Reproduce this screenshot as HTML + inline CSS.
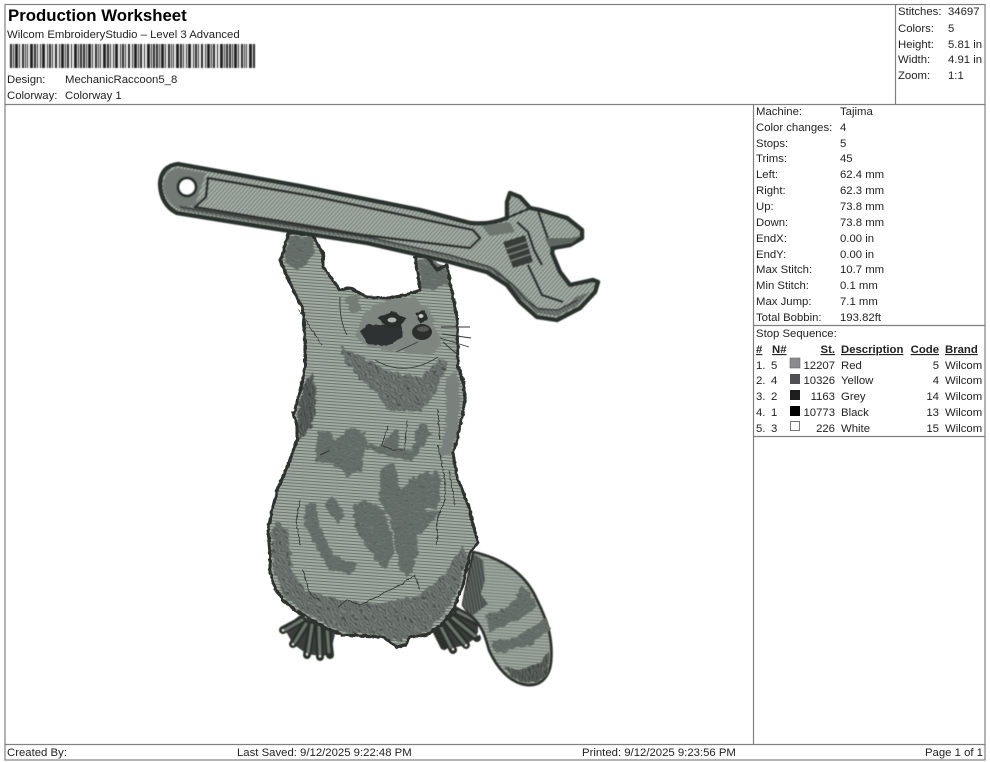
<!DOCTYPE html>
<html><head><meta charset="utf-8"><style>
html,body{margin:0;padding:0;background:#fff;width:990px;height:762px;overflow:hidden}
svg{display:block}
text{font-family:"Liberation Sans",Arial,sans-serif;font-size:11.35px;fill:#222}
.b{font-weight:bold;text-decoration:underline}
.e{text-anchor:end}
</style></head><body>
<svg width="990" height="762" viewBox="0 0 990 762" xmlns="http://www.w3.org/2000/svg">
<defs>
<pattern id="body" width="8" height="3" patternUnits="userSpaceOnUse" patternTransform="rotate(4)"><rect width="8" height="3" fill="#a0aaa1"/><rect y="2" width="8" height="1" fill="#6d766f"/></pattern>
<pattern id="diag" width="3" height="3" patternUnits="userSpaceOnUse" patternTransform="rotate(-48)"><rect width="3" height="3" fill="#a8b1a9"/><rect y="2" width="3" height="1" fill="#667068"/></pattern>
<pattern id="mid" width="3" height="3" patternUnits="userSpaceOnUse" patternTransform="rotate(50)"><rect width="3" height="3" fill="#747c76"/><rect y="2" width="3" height="1" fill="#484e4a"/></pattern>
<pattern id="patch" width="8" height="2.4" patternUnits="userSpaceOnUse" patternTransform="rotate(5)"><rect width="8" height="2.4" fill="#6d756f"/><rect y="1.6" width="8" height=".8" fill="#555c56"/></pattern>
<pattern id="drk" width="3" height="3" patternUnits="userSpaceOnUse" patternTransform="rotate(80)"><rect width="3" height="3" fill="#5d635e"/><rect y="2" width="3" height="1" fill="#393d39"/></pattern>
<filter id="rough" filterUnits="userSpaceOnUse" x="0" y="100" width="750" height="640"><feTurbulence type="fractalNoise" baseFrequency=".16" numOctaves="2" seed="4"/><feDisplacementMap in="SourceGraphic" scale="7" xChannelSelector="R" yChannelSelector="G"/><feGaussianBlur stdDeviation=".45"/></filter>
<filter id="edge" filterUnits="userSpaceOnUse" x="0" y="100" width="750" height="640"><feTurbulence type="fractalNoise" baseFrequency=".22" numOctaves="2" seed="9"/><feDisplacementMap in="SourceGraphic" scale="3" xChannelSelector="R" yChannelSelector="G"/><feGaussianBlur stdDeviation=".35"/></filter>
<filter id="soft" filterUnits="userSpaceOnUse" x="0" y="0" width="990" height="762"><feGaussianBlur stdDeviation=".4"/></filter>
</defs>
<rect width="990" height="762" fill="#fff"/>
<g fill="none" stroke="#808080" stroke-width="1.2">
<rect x="5" y="4.5" width="980" height="755.5"/>
<path d="M5 104.5H985M895.5 4.5V104.5M753.5 104.5V744.5M5 744.5H985M753.5 325.5H985M753.5 436.5H985"/>
</g>
<path d="M10 56H256" stroke="#222" stroke-width="24" fill="none" filter="url(#soft)" stroke-dasharray="2 1 1 1 3 1 1 2 2 1 1 1 1 2 3 1 2 1 1 2 1 1 3 2 1 1 2 1 1 2 2 2 1 1 3 1 1 1 2 2 1 2 3 1 1 1 2 1"/>
<text x="8" y="21" style="font-size:16.8px;font-weight:bold;fill:#000">Production Worksheet</text>
<text x="7" y="38">Wilcom EmbroideryStudio – Level 3 Advanced</text>
<text x="7" y="83">Design:</text><text x="65" y="83">MechanicRaccoon5_8</text>
<text x="7" y="99">Colorway:</text><text x="65" y="99">Colorway 1</text>
<text x="898" y="15">Stitches:</text><text x="948" y="15">34697</text>
<text x="898" y="32">Colors:</text><text x="948" y="32">5</text>
<text x="898" y="48">Height:</text><text x="948" y="48">5.81 in</text>
<text x="898" y="63">Width:</text><text x="948" y="63">4.91 in</text>
<text x="898" y="79">Zoom:</text><text x="948" y="79">1:1</text>
<text x="756" y="115">Machine:</text><text x="840" y="115">Tajima</text>
<text x="756" y="131">Color changes:</text><text x="840" y="131">4</text>
<text x="756" y="147">Stops:</text><text x="840" y="147">5</text>
<text x="756" y="162">Trims:</text><text x="840" y="162">45</text>
<text x="756" y="178">Left:</text><text x="840" y="178">62.4 mm</text>
<text x="756" y="194">Right:</text><text x="840" y="194">62.3 mm</text>
<text x="756" y="210">Up:</text><text x="840" y="210">73.8 mm</text>
<text x="756" y="226">Down:</text><text x="840" y="226">73.8 mm</text>
<text x="756" y="242">EndX:</text><text x="840" y="242">0.00 in</text>
<text x="756" y="258">EndY:</text><text x="840" y="258">0.00 in</text>
<text x="756" y="273">Max Stitch:</text><text x="840" y="273">10.7 mm</text>
<text x="756" y="289">Min Stitch:</text><text x="840" y="289">0.1 mm</text>
<text x="756" y="305">Max Jump:</text><text x="840" y="305">7.1 mm</text>
<text x="756" y="321">Total Bobbin:</text><text x="840" y="321">193.82ft</text>
<text x="756" y="337">Stop Sequence:</text>
<text x="756" y="353" class="b">#</text><text x="772" y="353" class="b">N#</text><text x="835" y="353" class="b e">St.</text><text x="841" y="353" class="b">Description</text><text x="939" y="353" class="b e">Code</text><text x="945" y="353" class="b">Brand</text>
<text x="756" y="369">1.</text><text x="771" y="369">5</text><rect x="790" y="358" width="10" height="10" fill="#8b8b8f" stroke="#666" stroke-width=".6"/><text x="835" y="369" class="e">12207</text><text x="841" y="369">Red</text><text x="939" y="369" class="e">5</text><text x="945" y="369">Wilcom</text>
<text x="756" y="384">2.</text><text x="771" y="384">4</text><rect x="790" y="374" width="10" height="10" fill="#505054"/><text x="835" y="384" class="e">10326</text><text x="841" y="384">Yellow</text><text x="939" y="384" class="e">4</text><text x="945" y="384">Wilcom</text>
<text x="756" y="400">3.</text><text x="771" y="400">2</text><rect x="790" y="390" width="10" height="10" fill="#1e1e1e"/><text x="835" y="400" class="e">1163</text><text x="841" y="400">Grey</text><text x="939" y="400" class="e">14</text><text x="945" y="400">Wilcom</text>
<text x="756" y="416">4.</text><text x="771" y="416">1</text><rect x="790" y="406" width="10" height="10" fill="#000"/><text x="835" y="416" class="e">10773</text><text x="841" y="416">Black</text><text x="939" y="416" class="e">13</text><text x="945" y="416">Wilcom</text>
<text x="756" y="432">5.</text><text x="771" y="432">3</text><rect x="790.5" y="421.5" width="9" height="9" fill="#fff" stroke="#555" stroke-width=".8"/><text x="835" y="432" class="e">226</text><text x="841" y="432">White</text><text x="939" y="432" class="e">15</text><text x="945" y="432">Wilcom</text>
<text x="7" y="756">Created By:</text><text x="237" y="756">Last Saved: 9/12/2025 9:22:48 PM</text><text x="582" y="756">Printed: 9/12/2025 9:23:56 PM</text><text x="983" y="756" class="e">Page 1 of 1</text>

<!-- feet -->
<g filter="url(#soft)" fill="none" stroke-linecap="round">
<path d="M456 606L478 620 478 636 466 645 452 648 432 632Z" fill="#3a3e3a"/>
<path d="M300 615L284 628 293 644 307 654 320 656 330 655 336 630Z" fill="#3a3e3a"/>
<g stroke="#2c302c" stroke-width="8"><path d="M458 612L478 622M453 618L477 638M447 622L466 645M441 627L453 650M436 630L444 646"/><path d="M302 620L283 630M306 624L293 644M312 625L307 655M319 627L320 657M327 628L330 655"/></g>
<g stroke="#6c736d" stroke-width="2.8"><path d="M458 612L476 621M453 618L475 636M447 622L464 643M441 627L451 647"/><path d="M302 620L285 630M306 624L295 642M312 625L308 652M319 627L320 654M327 628L329 652"/></g>
<g stroke="#e8e8e8" stroke-width="2"><path d="M478 634V634.5M466 645V645.5M453 649V649.5M283 630V630.5M293 644V644.5M307 654V654.5M320 656V656.5"/></g>
</g>
<!-- tail -->
<g filter="url(#soft)">
<path d="M473 552C500 558 525 572 537 600C548 622 553 640 551 662C549 680 538 686 527 685C510 683 497 668 489 650C485 635 482 625 470 615L463 605Z" fill="url(#body)" stroke="#2f332f" stroke-width="2.8" stroke-linejoin="round"/>
<path d="M474 554L483 560 485 580 481 594 488 604 472 616 462 605Z" fill="url(#drk)"/>
</g>
<g filter="url(#rough)"><path d="M486 615L505 610 516 598 521 587 530 592 537 607 522 618 505 626 490 632Z" fill="url(#patch)"/>
<path d="M492 640L515 638 533 627 546 618 549 630 530 646 510 650 495 654Z" fill="url(#patch)"/>
<path d="M502 666L520 670 538 664 549 652 548 672 540 682 525 683 512 677Z" fill="url(#drk)"/></g>
<!-- body -->
<path d="M288 233L284 250 280 260 290 283 303 310 305 340 305 367 302 383 298 398 295 412 293 413 297 425 297 440 288 465 277 490 276 496 272 510 268 530 270 555 270 573 276 590 283 600 295 610 307 617 325 628 343 635 365 636 383 637 397 647 405 645 410 637 427 635 441 625 453 610 463 585 470 553 478 542 473 525 470 510 463 492 457 477 455 465 453 453 458 436 462 417 465 400 463 380 458 367 457 317 450 283 447 265 437 270 425 255 415 257 418 275 420 290 405 295 390 298 367 297 350 288 340 290 323 267 323 253 315 240 313 235Z" fill="url(#body)"/>
<g filter="url(#rough)">
<path d="M289 236L313 238 316 252 308 262 297 270 284 262Z" fill="url(#patch)"/>
<path d="M418 260L430 258 446 268 448 285 430 290 421 288Z" fill="url(#patch)"/>
<path d="M303 385L313 372 317 400 312 425 299 440 297 415Z" fill="url(#drk)"/>
<path d="M445 378L456 372 461 400 459 430 450 452 440 458 447 415Z" fill="#7a817b"/>
<path d="M272 528L278 522 288 530 292 570 305 590 340 600 380 604 420 594 445 575 462 545 467 556 458 590 448 610 428 632 398 642 382 635 343 632 306 614 286 598 273 572Z" fill="url(#mid)"/>
<path d="M318 430L330 432 335 440 350 427 365 433 368 444 380 447 394 430 400 432 398 447 412 452 418 425 425 423 430 435 418 455 412 462 395 458 365 448 362 470 345 477 340 467 325 462 317 462 316 447Z" fill="url(#patch)"/>
<path d="M380 470L395 462 400 490 410 480 430 470 435 500 415 520 418 555 408 578 400 570 392 525 380 500Z" fill="url(#patch)"/>
<path d="M353 505L365 500 385 510 395 550 385 570 365 545 354 525Z" fill="url(#patch)"/>
<path d="M325 505L332 495 345 515 338 525Z" fill="url(#patch)"/>
<path d="M305 505L315 502 320 530 335 555 357 565 350 575 330 570 314 545 305 525Z" fill="url(#patch)"/>
<path d="M410 520L425 510 440 512 425 530 415 535Z" fill="url(#patch)"/>
<path d="M435 470L442 480 437 510 425 505 420 490Z" fill="url(#patch)"/>
</g>
<path d="M288 233L284 250 280 260 290 283 303 310 305 340 305 367 302 383 298 398 295 412 293 413 297 425 297 440 288 465 277 490 276 496 272 510 268 530 270 555 270 573 276 590 283 600 295 610 307 617 325 628 343 635 365 636 383 637 397 647 405 645 410 637 427 635 441 625 453 610 463 585 470 553 478 542 473 525 470 510 463 492 457 477 455 465 453 453 458 436 462 417 465 400 463 380 458 367 457 317 450 283 447 265 437 270 425 255 415 257 418 275 420 290 405 295 390 298 367 297 350 288 340 290 323 267 323 253 315 240 313 235Z" fill="none" stroke="#2f332f" stroke-width="3" stroke-linejoin="round" filter="url(#edge)"/>
<!-- head -->
<g filter="url(#rough)">
<path d="M340 343L350 352 363 357 390 372 420 377 440 360 447 362 443 377 432 398 420 412 387 410 378 396 360 378 345 362Z" fill="url(#mid)"/>
<path d="M373 305L385 300 415 298 430 312 436 330 442 345 430 355 400 352 370 348 355 336 360 320Z" fill="#7f8680"/>
<path d="M345 298L358 296 362 310 352 314Z" fill="#757c76"/>
</g>
<g filter="url(#edge)">
<path d="M360 331L367 325 402 325 402 337 387 346 367 344Z" fill="#2f3330"/>
<path d="M378 318L392 311 406 318 400 328 386 327Z" fill="#2c2f2c"/>
<path d="M416 313L424 310 428 319 420 324Z" fill="#2c2f2c"/>
</g>
<ellipse cx="392" cy="320" rx="4.5" ry="2.5" fill="#aeb4af"/><ellipse cx="421" cy="316" rx="2.5" ry="2" fill="#c5cac6"/>
<ellipse cx="422" cy="332" rx="10" ry="8" fill="#2d2f2d"/><ellipse cx="423" cy="329" rx="6" ry="2.6" fill="#565a56"/>
<path d="M340 297Q339 320 347 335M396 352L418 342M375 360Q405 378 438 357" stroke="#3a3e3b" stroke-width=".9" fill="none"/>
<path d="M441 327L470 327M442 334L471 338M440 338L469 347M443 342L458 355" stroke="#333" stroke-width=".9" fill="none"/>
<path d="M299 310L322 345M300 545L296 520 300 500M303 570L310 595 320 600M338 607L348 600 360 605 380 595 400 585 415 575 420 590M438 445L445 480 445 500 437 520 437 545M449 470L455 505M438 410L440 440M320 455L330 450M388 425L382 445 393 450 405 450 407 420" stroke="#2c2f2c" stroke-width=".8" fill="none" filter="url(#edge)"/>
<!-- wrench -->
<g filter="url(#soft)">
<path d="M160 184Q161 166 178 164L300 186 420 210 470 223Q490 225 507 218L507 202 510 193 520 197 530 208 540 210 567 218 582 230 582 238 570 245 553 248 552 253 560 272 570 285 593 280 598 282 595 292 580 308 557 320 537 317 520 302 507 285 487 272 450 262 367 243 283 230 177 213Q161 205 160 184Z" fill="url(#diag)" stroke="#2c302d" stroke-width="4.4" stroke-linejoin="round"/>
<path d="M163 185Q165 170 178 168L206 173 195 205 178 209Q164 200 163 185Z" fill="#737a74"/>
<path d="M180 210L283 227 367 240 450 259 487 269 507 282 520 298 537 313 557 316 578 305 590 292 578 296 560 310 537 307 520 290 495 268 450 255 367 236 283 222 180 205Z" fill="url(#mid)"/>
<path d="M180 207L283 224 367 237 450 255 490 267 512 284 526 300 538 309 558 310 578 300" stroke="#3a3e3b" stroke-width="1.6" fill="none"/>
<circle cx="187" cy="187" r="10.5" fill="#2c302d"/><circle cx="187" cy="187" r="7.5" fill="#fff"/>
<path d="M208 178L317 197 417 218 473 230 480 238 470 248 363 235 195 207 206 197Z" fill="none" stroke="#2f332f" stroke-width="2.6" stroke-linejoin="round"/>
<path d="M517 222L528 232 534 250 542 265M507 218L528 209M538 211L552 250 560 272M528 265L542 295 563 302" stroke="#2c302d" stroke-width="2.4" fill="none"/>
<path d="M503 242L525 235 533 262 513 268Z" fill="#383c39"/>
<path d="M506 249L527 242M508 255L529 248M510 261L531 254" stroke="#7d847e" stroke-width="1.3"/>
<path d="M482 226L510 222 515 232 490 236Z" fill="#6d746e"/>
<path d="M549 247L572 243 580 236 570 238 545 238Z" fill="#5f6660"/>
</g>
</svg>
</body></html>
